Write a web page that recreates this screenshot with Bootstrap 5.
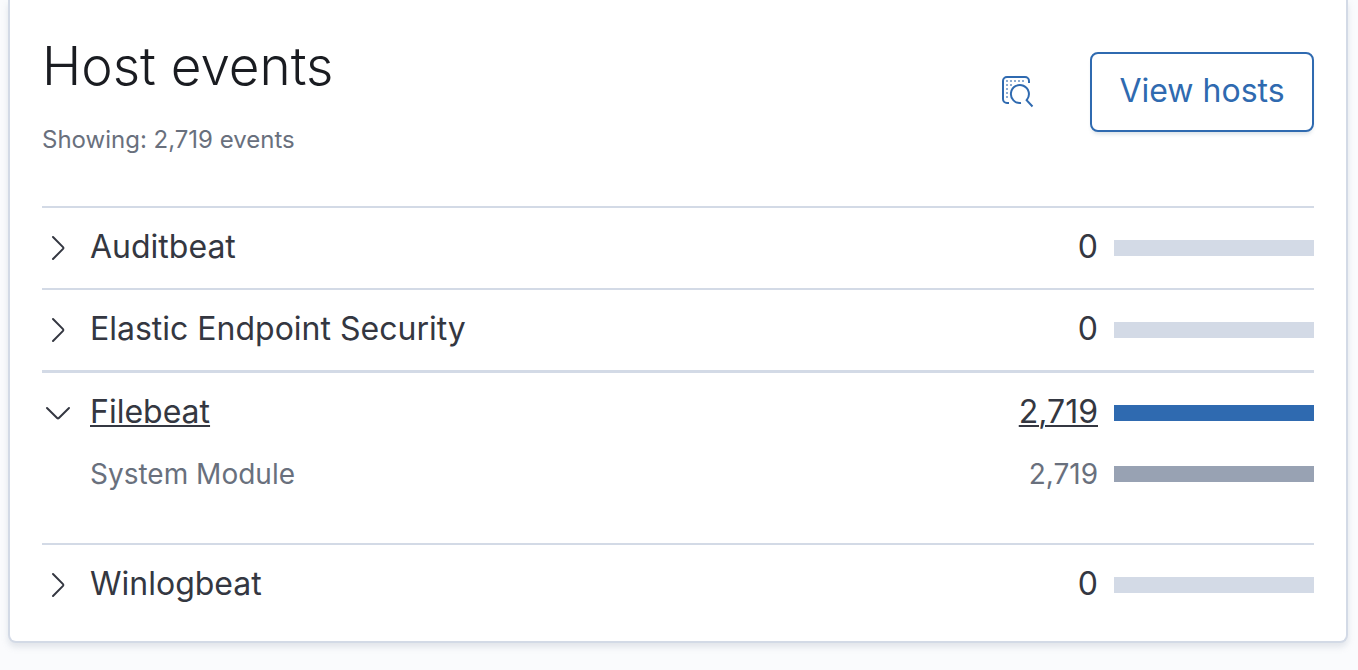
<!DOCTYPE html>
<html lang="en">
<head>
<meta charset="utf-8">
<meta name="viewport" content="width=device-width, initial-scale=1">
<title>Host events</title>
<link href="https://cdn.jsdelivr.net/npm/bootstrap@5.3.0/dist/css/bootstrap.min.css" rel="stylesheet">
<style>
body{background:#fafbfd;color:#343741;font-family:Inter,sans-serif;font-size:32px;line-height:48px}
.panel{background:#fff;border:2px solid #d3dae6;border-top:0;border-radius:0 0 8px 8px;box-shadow:0 4px 6px rgba(152,162,179,.25);margin:0 10px 24px 8px;padding:32px 32px 16px}
.panel-header{margin-bottom:48px}
.panel-title{font-size:53px;line-height:68px;font-weight:350;color:#1a1c21;margin-bottom:22px}
.subtitle{font-size:24px;line-height:36px;color:#69707d}
.panel-actions{gap:48px;margin-top:20px}
.btn-hosts,.btn-hosts:hover{min-width:224px;font-size:32px;line-height:48px;padding:13px 24px 15px;color:#2f6ab0;border:2px solid #2f6ab0;border-radius:8px;background:#fff;box-shadow:0 4px 4px -2px rgba(54,97,126,.2)}
.btn-inspect,.btn-inspect:hover{color:#2f6ab0;padding:8px;line-height:0;border:0}
.event-group{border-top:2px solid #d3dae6}
.event-group.is-open{border-top-width:3px;padding-bottom:48px}
.event-row{height:80px}
.event-label{gap:16px;color:inherit;font:inherit;line-height:48px}
.event-label svg{flex:none}
.event-name{padding-bottom:2px}
.meter-line{gap:16px}
.meter-bar{width:200px;height:16px;background:#d3dae6}
.meter-fill{height:100%;background:#2f6ab0}
.module-row{font-size:28px;line-height:42px;color:#69707d;padding-left:48px}
.module-row .meter-fill{background:#98a2b3}
.is-open .event-row .event-name{text-decoration:underline;text-decoration-thickness:2px;text-underline-offset:2px}
</style>
</head>
<body>
<svg class="d-none" aria-hidden="true">
<symbol id="chevron-right" viewBox="0 0 32 32"><path d="M11 5 21 15.1q.8.9 0 1.8L11 27" fill="none" stroke="currentColor" stroke-width="2" stroke-linecap="round"/></symbol>
<symbol id="chevron-down" viewBox="0 0 32 32"><path d="M5 11 15.1 21q.9.8 1.8 0L27 11" fill="none" stroke="currentColor" stroke-width="2" stroke-linecap="round"/></symbol>
</svg>
<main class="panel">
<header class="panel-header d-flex justify-content-between align-items-start">
<div>
<h1 class="panel-title">Host events</h1>
<p class="subtitle mb-0">Showing: 2,719 events</p>
</div>
<div class="panel-actions d-flex align-items-center">
<button type="button" class="btn btn-inspect" aria-label="Inspect">
<svg width="32" height="32" viewBox="0 0 32 32" aria-hidden="true">
<g fill="none" stroke="currentColor" stroke-width="2">
<path d="M27 7V5a4 4 0 0 0-4-4H5a4 4 0 0 0-4 4v18a4 4 0 0 0 4 4h2"/>
<path d="M19 27A9 9 0 1 1 25 23.600L24.600 24.200 30.500 30.500"/>
</g>
<path d="M4 4h2v2H4zM8 4h2v2H8zM12 4h2v2h-2zM16 4h2v2h-2zM20 4h2v2h-2zM4 8h2v2H4zM8 8h2v2H8zM4 12h2v2H4zM4 16h2v2H4zM4 20h2v2H4z" fill="currentColor" opacity=".55"/>
</svg>
</button>
<button type="button" class="btn btn-hosts">View hosts</button>
</div>
</header>
<section class="event-group">
<div class="event-row d-flex align-items-center justify-content-between">
<button type="button" class="event-label btn p-0 border-0 d-flex align-items-center" aria-expanded="false"><svg width="32" height="32" aria-hidden="true"><use href="#chevron-right"/></svg><span class="event-name">Auditbeat</span></button>
<div class="meter-line d-flex align-items-center"><span class="event-name">0</span><div class="meter-bar"></div></div>
</div>
</section>
<section class="event-group">
<div class="event-row d-flex align-items-center justify-content-between">
<button type="button" class="event-label btn p-0 border-0 d-flex align-items-center" aria-expanded="false"><svg width="32" height="32" aria-hidden="true"><use href="#chevron-right"/></svg><span class="event-name">Elastic Endpoint Security</span></button>
<div class="meter-line d-flex align-items-center"><span class="event-name">0</span><div class="meter-bar"></div></div>
</div>
</section>
<section class="event-group is-open">
<div class="event-row d-flex align-items-center justify-content-between">
<button type="button" class="event-label btn p-0 border-0 d-flex align-items-center" aria-expanded="true"><svg width="32" height="32" aria-hidden="true"><use href="#chevron-down"/></svg><span class="event-name">Filebeat</span></button>
<div class="meter-line d-flex align-items-center"><span class="event-name">2,719</span><div class="meter-bar"><div class="meter-fill" style="width:100%"></div></div></div>
</div>
<div class="module-row d-flex align-items-center justify-content-between">
<span>System Module</span>
<div class="meter-line d-flex align-items-center"><span>2,719</span><div class="meter-bar"><div class="meter-fill" style="width:100%"></div></div></div>
</div>
</section>
<section class="event-group">
<div class="event-row d-flex align-items-center justify-content-between">
<button type="button" class="event-label btn p-0 border-0 d-flex align-items-center" aria-expanded="false"><svg width="32" height="32" aria-hidden="true"><use href="#chevron-right"/></svg><span class="event-name">Winlogbeat</span></button>
<div class="meter-line d-flex align-items-center"><span class="event-name">0</span><div class="meter-bar"></div></div>
</div>
</section>
</main>
<script src="https://cdn.jsdelivr.net/npm/bootstrap@5.3.0/dist/js/bootstrap.bundle.min.js"></script>
</body>
</html>
